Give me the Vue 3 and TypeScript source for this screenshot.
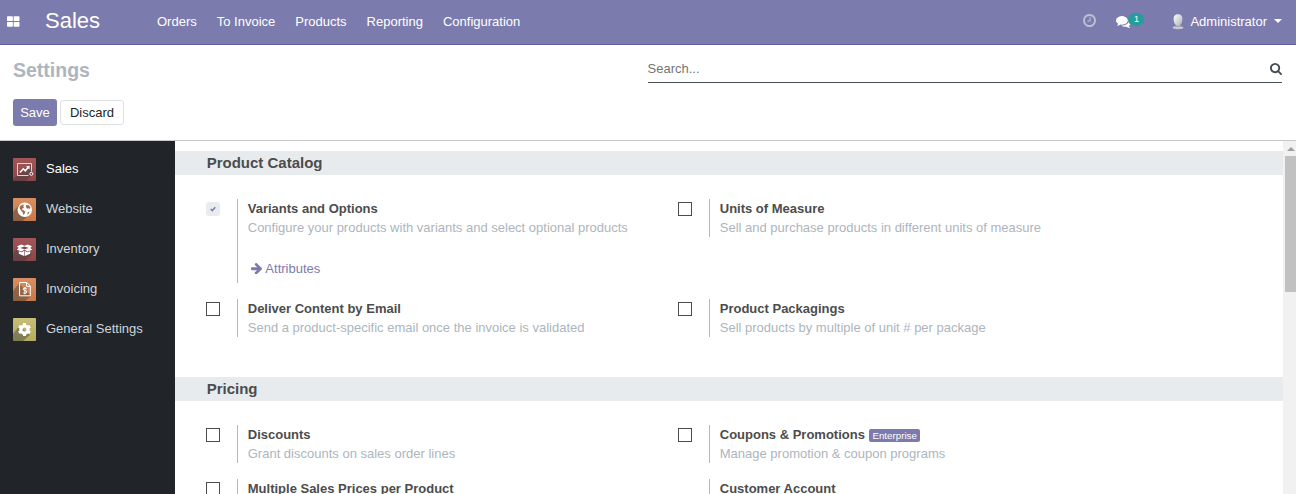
<script setup lang="ts">
interface Setting {
  title: string
  text?: string
  checked?: boolean
  nobox?: boolean
  link?: string
  badge?: string
}
interface Section {
  title: string
  items: Setting[]
}

const menus: string[] = ['Orders', 'To Invoice', 'Products', 'Reporting', 'Configuration']

const apps = [
  { id: 'sales', label: 'Sales', tone: 'red' },
  { id: 'website', label: 'Website', tone: 'orange' },
  { id: 'inventory', label: 'Inventory', tone: 'red' },
  { id: 'invoicing', label: 'Invoicing', tone: 'orange' },
  { id: 'general', label: 'General Settings', tone: 'olive' },
]

const sections: Section[] = [
  {
    title: 'Product Catalog',
    items: [
      { title: 'Variants and Options', text: 'Configure your products with variants and select optional products', checked: true, link: 'Attributes' },
      { title: 'Units of Measure', text: 'Sell and purchase products in different units of measure' },
      { title: 'Deliver Content by Email', text: 'Send a product-specific email once the invoice is validated' },
      { title: 'Product Packagings', text: 'Sell products by multiple of unit # per package' },
    ],
  },
  {
    title: 'Pricing',
    items: [
      { title: 'Discounts', text: 'Grant discounts on sales order lines' },
      { title: 'Coupons & Promotions', text: 'Manage promotion & coupon programs', badge: 'Enterprise' },
      { title: 'Multiple Sales Prices per Product' },
      { title: 'Customer Account', nobox: true },
    ],
  },
]
</script>

<template>
  <div class="page">
    <header class="navbar">
      <svg class="grid-icon" viewBox="0 0 13 11"><path d="M.8 0h4.6q.7 0 .7.8v3.6q0 .7-.7.7H.8Q0 5.100 0 4.400V.8Q0 0 .8 0zM7.600 0h4.600q.8 0 .8.8v3.600q0 .7-.8.7H7.600q-.7 0-.7-.7V.8q0-.8.7-.8zM.8 5.900h4.600q.7 0 .7.700v3.600q0 .8-.7.800H.8q-.8 0-.8-.8V6.600q0-.7.8-.7zM7.600 5.900h4.600q.8 0 .8.700v3.600q0 .8-.8.800H7.600q-.7 0-.7-.8V6.600q0-.7.700-.7z" /></svg>
      <span class="brand">Sales</span>
      <nav class="menus">
        <a v-for="m in menus" :key="m">{{ m }}</a>
      </nav>
      <div class="systray">
        <svg class="clock" viewBox="128 128 1536 1536"><path d="M1024 544v448q0 14-9 23t-23 9h-320q-14 0-23-9t-9-23v-64q0-14 9-23t23-9h224v-352q0-14 9-23t23-9h64q14 0 23 9t9 23zm416 352q0-148-73-273t-198-198-273-73-273 73-198 198-73 273 73 273 198 198 273 73 273-73 198-198 73-273zm224 0q0 209-103 385.500t-279.500 279.500-385.500 103-385.500-103-279.500-279.500-103-385.500 103-385.500 279.500-279.500 385.500-103 385.500 103 279.500 279.500 103 385.500z" /></svg>
        <div class="chat">
          <svg viewBox="0 256 1792 1408"><path d="M1408 768q0 139-94 257t-256.500 186.500-353.500 68.500q-86 0-176-16-124 88-278 128-36 9-86 16h-3q-11 0-20.500-8t-11.500-21q-1-3-1-6.500t.5-6.500 2-6l2.500-5 3.500-5.500 4-5 4.500-5 4-4.500q5-6 23-25t26-29.500 22.500-29 25-38.500 20.500-44q-124-72-195-177t-71-224q0-139 94-257t256.500-186.500 353.500-68.500 353.500 68.500 256.500 186.500 94 257zm384 256q0 120-71 224.500t-195 176.500q10 24 20.500 44t25 38.500 22.500 29 26 29.500 23 25q1 1 4 4.500t4.500 5 4 5 3.500 5.500l2.500 5 2 6 .5 6.500-1 6.500q-3 14-13 22t-22 7q-50-7-86-16-154-40-278-128-90 16-176 16-271 0-472-132 58 4 88 4 161 0 309-45t264-129q125-92 192-212t67-254q0-77-23-152 129 71 204 178t75 230z" /></svg>
          <span class="count">1</span>
        </div>
        <div class="user">
          <svg class="avatar" viewBox="0 0 12 16">
            <defs>
              <linearGradient id="avatarShade" x1="0" x2="1" y1="0" y2="1">
                <stop offset="0" stop-color="#fff" />
                <stop offset="1" stop-color="#aeb1b7" />
              </linearGradient>
            </defs>
            <ellipse cx="6" cy="13.600" rx="5.400" ry="1.700" fill="#c6c9cf" />
            <path d="M3.800 9.500h4.400V13H3.800z" fill="#a9acb4" />
            <path d="M6 .2q4.400 0 4.400 4.600Q10.200 11.500 6 11.800 1.800 11.500 1.600 4.800 1.600.2 6 .2z" fill="url(#avatarShade)" />
          </svg>
          <span>Administrator</span>
          <i class="caret"></i>
        </div>
      </div>
    </header>

    <div class="control">
      <div class="control-left">
        <h1>Settings</h1>
        <div class="buttons">
          <button class="save">Save</button>
          <button class="discard">Discard</button>
        </div>
      </div>
      <div class="search">
        <span>Search...</span>
        <svg viewBox="64 128 1664 1664"><path d="M1216 832q0-185-131.500-316.500t-316.500-131.500-316.500 131.500-131.500 316.500 131.500 316.500 316.500 131.500 316.500-131.500 131.500-316.500zm512 832q0 52-38 90t-90 38q-54 0-90-38l-343-342q-179 124-399 124-143 0-273.500-55.500t-225-150-150-225-55.500-273.500 55.500-273.500 150-225 225-150 273.500-55.500 273.500 55.500 225 150 150 225 55.500 273.500q0 220-124 399l343 343q37 37 37 90z" /></svg>
      </div>
    </div>

    <div class="body">
      <aside class="sidebar">
        <div v-for="a in apps" :key="a.id" class="app" :class="{ active: a.id === 'sales' }">
          <svg class="app-icon" :class="a.tone" viewBox="0 0 23 23">
            <template v-if="a.id === 'sales'">
              <path class="shade" d="M4 17.500 0 21.500V23h13l6-6V5.500z" />
              <path class="line frame" d="M15.500 17.500h-11v-12h14v8" />
              <path class="line thick" d="m7 14.500 3.300-3.700 2 2 3-3.500" />
              <path class="solid" d="m13 8.300 3.700-.5-.3 3.700z" />
              <circle class="line" cx="18.300" cy="15.800" r="1.500" />
            </template>
            <template v-else-if="a.id === 'website'">
              <path class="shade" d="M6 7 0 14v9h9.500l8-7.500z" />
              <circle class="solid" cx="11.800" cy="11.800" r="7.200" />
              <path class="land" d="m6.800 8.200 2.800-1.800 1.600.5-1.200 1.400 1.200 1.200-1.700 1-.6 1.200 1.900.5 1.500 1.500-.6 1.700-1.300 1.500-.9-2.800-1.900-2-1-2zM13.200 7l2.700.3 1.500 2.200-.7 1.500-1.200-.8-1.300.5-1.300-1.600zM14.600 14.500l2-1-1 2.300-1.300.9z" />
            </template>
            <template v-else-if="a.id === 'inventory'">
              <path class="shade" d="M4 10 0 16v7h12l7-7z" />
              <path class="solid" d="m4 8.200 4.300-1.700 3.200 1.200 3.200-1.200 4.300 1.700-1.700 1.900 2 1.600-4.800 1.800-3-2-3 2-4.800-1.800 2-1.600z" />
              <path class="box-gap" d="m7.200 9.900 4.300-1.300 4.300 1.300-4.300 1.300z" />
              <path class="solid" d="m5.800 13.200 2.900 1.100 2.500-1.600v5.300l-5.400-2.200zM11.800 12.700l2.500 1.600 2.900-1.100v2.600L11.800 18z" />
            </template>
            <template v-else-if="a.id === 'invoicing'">
              <path class="shade" d="M6 5.500 0 13v10h12l6-5z" />
              <path class="line" d="M6.600 4.500h7.200l3.500 3.500v9.800H6.600zM13.500 4.800V8.300h3.500" />
              <path class="line" d="M13.700 10.800q-.5-.8-1.900-.8-1.700 0-1.700 1.200 0 1 1.700 1.300 1.900.3 1.900 1.500 0 1.300-1.900 1.300-1.400 0-2-.9M11.900 9v7.300" />
            </template>
            <template v-else>
              <path class="shade" d="M6 8 0 16v7h10l7-6z" />
              <circle class="cog" cx="11.500" cy="11.500" r="3.600" />
              <path class="teeth" d="M11.500 5v2.500M11.500 15.500V18M5.900 8.200l2.100 1.300M15 13.500l2.100 1.300M5.900 14.800 8 13.500M15 9.500l2.100-1.300" />
            </template>
          </svg>
          <span>{{ a.label }}</span>
        </div>
      </aside>

      <main class="settings">
        <section v-for="s in sections" :key="s.title">
          <h2>{{ s.title }}</h2>
          <div class="items">
            <div v-for="item in s.items" :key="item.title" class="item">
              <div class="left">
                <span v-if="!item.nobox" class="box" :class="{ checked: item.checked }">
                  <svg v-if="item.checked" viewBox="0 0 6 6"><path d="m.7 3 1.600 1.600L5.300 1.300" /></svg>
                </span>
              </div>
              <div class="right">
                <div class="title">{{ item.title }}<span v-if="item.badge" class="badge">{{ item.badge }}</span></div>
                <div v-if="item.text" class="text">{{ item.text }}</div>
                <div v-if="item.link" class="link">
                  <svg viewBox="128 192 1472 1547"><path d="M1600 960q0 54-37 91l-651 651q-39 37-91 37-51 0-90-37l-75-75q-38-38-38-91t38-91l293-293h-704q-52 0-84.500-37.500t-32.500-90.500v-128q0-53 32.500-90.500t84.500-37.500h704l-293-294q-38-36-38-90t38-90l75-75q38-38 90-38 53 0 91 38l651 651q37 35 37 90z" /></svg>
                  <span>{{ item.link }}</span>
                </div>
              </div>
            </div>
          </div>
        </section>
      </main>

      <div class="scrollbar">
        <i class="up"></i>
        <div class="thumb"></div>
      </div>
    </div>
  </div>
</template>

<style>
body {
  margin: 0;
  overflow: hidden;
}
</style>

<style scoped>
* {
  box-sizing: border-box;
}
.page {
  width: 1296px;
  height: 494px;
  display: flex;
  flex-direction: column;
  overflow: hidden;
  background: #fff;
  font: 13px/19px "Liberation Sans", Arial, sans-serif;
  color: #4c4c4c;
}
svg {
  display: block;
  flex: none;
}
.navbar {
  flex: none;
  height: 45px;
  display: flex;
  align-items: center;
  padding: 0 14px 2px 7px;
  background: #7c7bad;
  border-bottom: 1px solid #5f5e97;
  color: #fff;
}
.navbar svg {
  fill: #fff;
}
.grid-icon {
  width: 12.500px;
  height: 11px;
}
.brand {
  margin-left: 25.500px;
  width: 112px;
  font-size: 22px;
  line-height: 30px;
}
.menus {
  display: flex;
  gap: 20px;
}
.systray {
  margin-left: auto;
  display: flex;
  align-items: center;
}
.navbar .clock {
  width: 13px;
  height: 13px;
  margin-right: 20px;
  margin-bottom: 2px;
  opacity: 0.5;
}
.chat {
  display: flex;
  margin-right: 28px;
  margin-bottom: 3px;
}
.chat svg {
  width: 15px;
  height: 12px;
  margin-top: 4px;
}
.count {
  width: 16px;
  height: 13px;
  margin: 1px 0 0 -3px;
  border-radius: 7px;
  background: #269d9b;
  font-size: 9px;
  line-height: 13px;
  text-align: center;
}
.user {
  display: flex;
  align-items: center;
}
.avatar {
  width: 12px;
  height: 16px;
  margin: 1px 6px 0 0;
}
.caret {
  margin-left: 7px;
  border: 4px solid transparent;
  border-top-color: #fff;
  border-bottom: 0;
}
.control {
  flex: none;
  height: 96px;
  display: flex;
  justify-content: space-between;
  padding: 0 14px 0 13px;
  border-bottom: 1px solid #c8c8c8;
}
h1 {
  margin: 11px 0 14px;
  font-size: 19.500px;
  line-height: 29px;
  color: #adb5bd;
}
.buttons {
  display: flex;
  align-items: center;
  gap: 3px;
}
button {
  padding: 0;
  font: inherit;
  border-radius: 3px;
}
.save {
  width: 44px;
  height: 27px;
  border: 0;
  background: #7c7bad;
  color: #fff;
}
.discard {
  width: 64px;
  height: 25px;
  border: 1px solid #dee2e6;
  background: #fff;
  color: #212529;
}
.search {
  width: 634.500px;
  height: 38px;
  display: flex;
  align-items: center;
  justify-content: space-between;
  padding-top: 10px;
  border-bottom: 1px solid #4c5058;
  color: #757575;
}
.search svg {
  width: 12px;
  height: 12px;
  fill: #444b52;
}
.body {
  flex: 1;
  min-height: 0;
  display: flex;
}
.sidebar {
  flex: none;
  width: 175px;
  padding-top: 8px;
  background: #212529;
  color: #ced4da;
}
.app {
  height: 40px;
  display: flex;
  align-items: center;
  padding: 0 0 1px 13px;
}
.app.active {
  color: #fff;
}
.app-icon {
  width: 23px;
  height: 23px;
  margin: 2px 10px 0 0;
  border-radius: 1px;
}
.red {
  background: linear-gradient(#a15757, #8d4549);
}
.orange {
  background: linear-gradient(#d98e61, #c97846);
}
.olive {
  background: linear-gradient(#c6bf78, #b6ab61);
}
.shade {
  fill: #343b3e;
  opacity: 0.42;
}
.line {
  fill: none;
  stroke: #fff;
  stroke-width: 1;
}
.frame {
  stroke: #e3d3d3;
}
.thick {
  stroke-width: 1.600;
}
.solid {
  fill: #fff;
}
.land {
  fill: #a36b49;
}
.box-gap {
  fill: #81474a;
}
.cog {
  fill: none;
  stroke: #fff;
  stroke-width: 3.200;
}
.teeth {
  fill: none;
  stroke: #fff;
  stroke-width: 3;
}
.settings {
  flex: 1;
  min-width: 0;
  padding-top: 10px;
  overflow: hidden;
}
h2 {
  margin: 0;
  padding-left: 31.700px;
  height: 24px;
  background: #e7ebee;
  font-size: 15px;
  line-height: 24px;
  color: #4c4c4c;
}
.items {
  display: grid;
  grid-template-columns: 472px 472px;
  align-items: start;
  row-gap: 16px;
  padding: 24px 0 40px 31px;
}
.item {
  display: flex;
  min-height: 38px;
}
.left {
  width: 31px;
  padding-top: 3px;
}
.box {
  display: flex;
  align-items: center;
  justify-content: center;
  width: 14px;
  height: 14px;
  border: 1px solid #4c4c4c;
}
.box.checked {
  border: 0;
  border-radius: 3px;
  background: #e9ecef;
}
.box svg {
  width: 6px;
  height: 6px;
}
.box path {
  fill: none;
  stroke: #7c7bad;
  stroke-width: 1.500;
}
.right {
  padding-left: 9.750px;
  border-left: 1px solid #b5b8bb;
  white-space: nowrap;
}
.title {
  display: flex;
  align-items: center;
  height: 19px;
  font-weight: bold;
}
.badge {
  height: 13px;
  margin: 1px 0 0 4px;
  padding: 0 3.500px;
  border-radius: 2px;
  background: #7c7bad;
  color: #fff;
  font-size: 9.750px;
  font-weight: normal;
  line-height: 14px;
}
.text {
  color: #adb5bd;
}
.link {
  display: flex;
  align-items: center;
  gap: 3px;
  margin: 22px 0 5px 3.600px;
  color: #7c7bad;
}
.link svg {
  width: 11px;
  height: 11.500px;
  fill: #7c7bad;
}
.scrollbar {
  flex: none;
  width: 13px;
  display: flex;
  flex-direction: column;
  padding: 6px 0 0 2px;
  background: #f1f1f1;
}
.up {
  align-self: flex-start;
  margin: 0 0 5px 1.500px;
  border: 4px solid transparent;
  border-top: 0;
  border-bottom-color: #a0a0a0;
}
.thumb {
  height: 136px;
  background: #c1c1c1;
}
</style>
